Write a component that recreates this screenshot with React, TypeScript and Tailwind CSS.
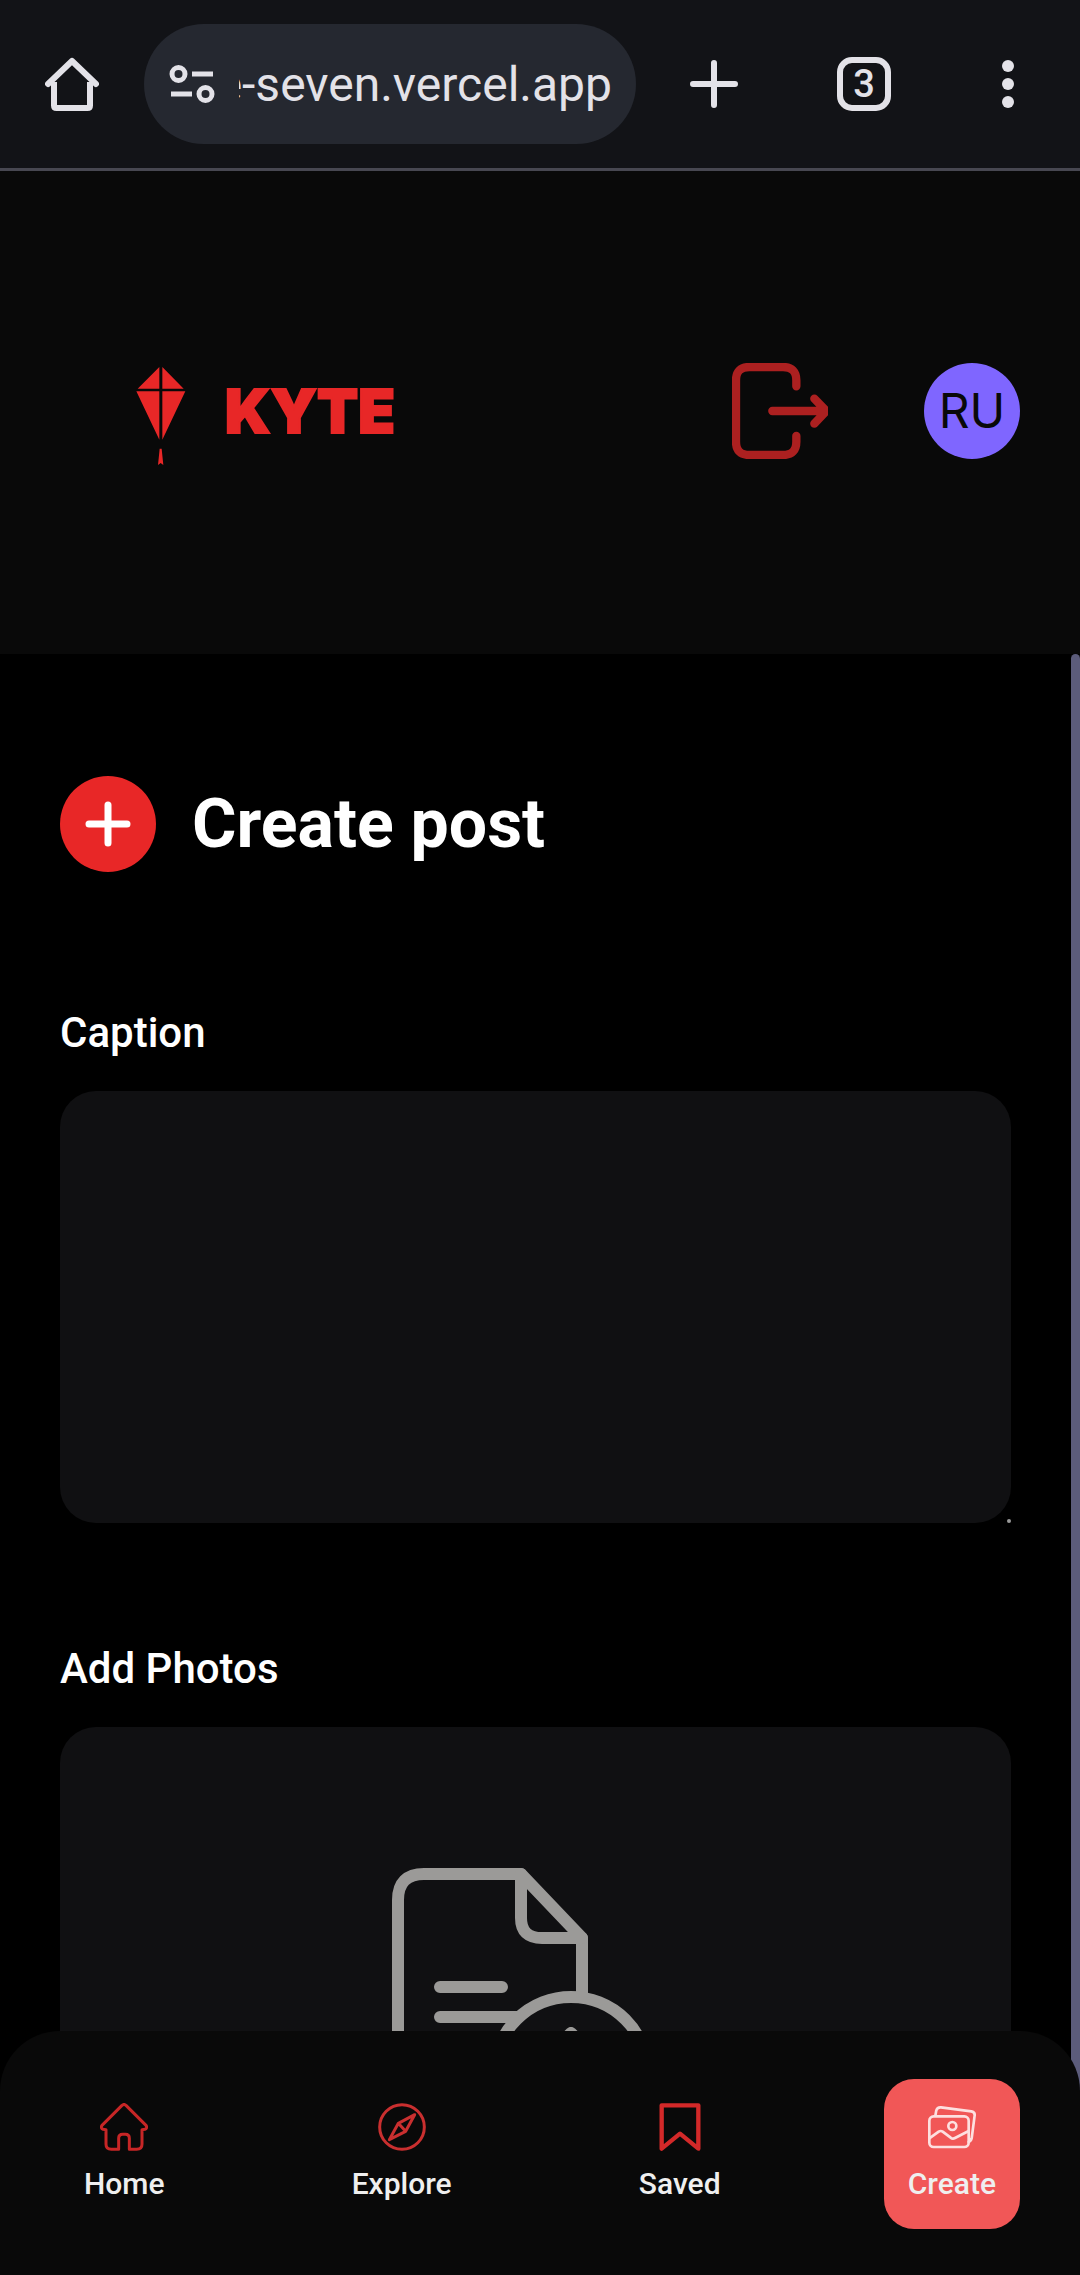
import React from "react";

function BrowserBar() {
  return (
    <div className="flex h-[171px] shrink-0 items-center border-b-[3px] border-[#474751] bg-[#121317] text-[#e3e2e8]">
      <button aria-label="Home page" className="ml-[45px] shrink-0">
        <svg width="54" height="54" viewBox="0 0 54 54" fill="none" stroke="currentColor" strokeWidth="6">
          <path d="M3 27 27 4 51 27" strokeLinecap="round" strokeLinejoin="round" />
          <path d="M9 25V48.500Q9 51 11.500 51H42.500Q45 51 45 48.500V25" />
        </svg>
      </button>
      <button className="mr-[54px] ml-[45px] flex h-[120px] min-w-0 flex-1 items-center rounded-full bg-[#252830] pr-6 pl-[25px]">
        <svg className="shrink-0" width="46" height="40" viewBox="0 0 46 40" fill="none" stroke="currentColor" strokeWidth="5">
          <circle cx="9.500" cy="10" r="6.500" />
          <path d="M23 10h21M2 30h21" />
          <circle cx="36.500" cy="30" r="6.500" />
        </svg>
        <span className="ml-6 flex min-w-0 flex-1 justify-end overflow-hidden pt-[2px] text-[48px] leading-[60px] whitespace-nowrap">
          kyte-seven.vercel.app
        </span>
      </button>
      <button aria-label="New tab" className="shrink-0">
        <svg width="48" height="48" viewBox="0 0 48 48" stroke="currentColor" strokeWidth="6" strokeLinecap="round">
          <path d="M24 3v42M3 24h42" />
        </svg>
      </button>
      <button
        aria-label="Open tabs"
        className="ml-[99px] flex size-[54px] shrink-0 items-center justify-center rounded-[15px] border-[6px] border-current text-[38px] leading-[42px] font-medium"
      >
        3
      </button>
      <button aria-label="Menu" className="mr-[66px] ml-[111px] flex shrink-0 flex-col gap-[6px]">
        <span className="size-3 rounded-full bg-current" />
        <span className="size-3 rounded-full bg-current" />
        <span className="size-3 rounded-full bg-current" />
      </button>
    </div>
  );
}

function Header() {
  return (
    <header className="flex shrink-0 items-center justify-between bg-[#090909] pt-48 pr-[60px] pb-[195px] pl-[136px]">
      <a href="#home" className="flex h-24 items-center text-[#e82727]">
        <svg width="50" height="108" viewBox="110 52 150 324" fill="currentColor">
          <path d="M180 82V147H115ZM189 82 253 147H189ZM111 155H180V300ZM189 155H258L189 300ZM181 327H187L192 376 184 370 176 376Z" />
        </svg>
        <span className="ml-[39px] font-['Inter'] text-[60px] leading-[60px] font-black [-webkit-text-stroke:2px_currentColor]">
          KYTE
        </span>
      </a>
      <div className="flex items-center gap-24">
        <button aria-label="Log out">
          <svg width="96" height="96" viewBox="0 0 288 288" fill="none" stroke="#ac2020" strokeWidth="25" strokeLinecap="round" strokeLinejoin="round">
            <path d="M193 70V52Q193 12 153 12H52Q12 12 12 52V236Q12 276 52 276H153Q193 276 193 236V219" />
            <path d="M121 144H276M247 107 283 144 247 182" />
          </svg>
        </button>
        <a href="#profile" className="flex size-24 items-center justify-center rounded-full bg-[#7f66ff] font-['Inter'] text-[48px] leading-[48px] text-[#090909]">
          RU
        </a>
      </div>
    </header>
  );
}

function UploadIcon() {
  return (
    <svg width="288" height="288" viewBox="0 0 288 288" fill="none" stroke="#9b9a98" strokeWidth="12" strokeLinecap="round" strokeLinejoin="round">
      <path d="M110 282H30Q6 282 6 256V32Q6 6 32 6H129L190 70V129" />
      <path d="M129 6V50Q129 70 150 70H190" />
      <path d="M48 119H110M48 149H126" />
      <circle cx="179" cy="206" r="77" />
      <path d="M179 245V165M150 194 179 165 208 194" />
    </svg>
  );
}

function CreateForm() {
  return (
    <form className="min-w-0 flex-1 px-[60px] pt-[122px]">
      <div className="flex items-center gap-9">
        <svg width="96" height="96" viewBox="0 0 96 96">
          <circle cx="48" cy="48" r="48" fill="#e82727" />
          <path d="M48 29v38M29 48h38" stroke="#fff" strokeWidth="7" strokeLinecap="round" />
        </svg>
        <h1 className="text-[68px] leading-[84px] font-bold">Create post</h1>
      </div>
      <label htmlFor="caption" className="mt-[140px] block text-[42px] leading-[42px] font-medium">
        Caption
      </label>
      <div className="relative mt-[37px]">
        <textarea id="caption" className="block h-[432px] w-full resize-none rounded-[36px] bg-[#101012] p-9 text-[42px] outline-none" />
        <span className="absolute right-0 bottom-0 size-1 rounded-full bg-[#9a9a9a]" />
      </div>
      <label htmlFor="photos" className="mt-[125px] block text-[42px] leading-[42px] font-medium">
        Add Photos
      </label>
      <label htmlFor="photos" className="mt-[37px] flex flex-col items-center rounded-[36px] bg-[#101012] pt-[141px] pb-36">
        <UploadIcon />
        <input id="photos" type="file" className="sr-only" />
      </label>
    </form>
  );
}

const HomeIcon = (
  <path
    strokeWidth="9"
    d="M66 7Q72 2 78 7L138 67Q143 76 135 79L126 80V124Q126 139 110 139H88V106Q88 94 76 94H68Q56 94 56 106V139H34Q18 139 18 124V80L9 79Q1 76 6 67Z"
  />
);
const ExploreIcon = (
  <g strokeWidth="9">
    <circle cx="72" cy="72" r="67" />
    <path d="M110 35 61 61 34 110 83 85ZM61 61 83 85" />
  </g>
);
const SavedIcon = <path strokeWidth="13" d="M17 7H127V137L72 92 17 137Z" />;
const CreateIcon = (
  <g strokeWidth="8">
    <rect x="4" y="40" width="118" height="92" rx="13" />
    <circle cx="73" cy="69" r="12" />
    <path d="M4 106 32 86Q38 82 44 86L68 104Q74 109 81 105L122 84" />
    <path d="M22 38 25 22Q28 12 39 13L130 25Q141 27 140 37L131 106Q129 115 122 117" />
  </g>
);

const tabs = [
  { label: "Home", icon: HomeIcon, style: "text-[#c72626]" },
  { label: "Explore", icon: ExploreIcon, style: "text-[#c92f2f]" },
  { label: "Saved", icon: SavedIcon, style: "text-[#d32929]" },
  { label: "Create", icon: CreateIcon, style: "bg-[#f15757] text-[#fde0e0]" },
];

function BottomNav() {
  return (
    <nav className="fixed inset-x-0 bottom-0 flex justify-between rounded-t-[60px] bg-[#090909] px-[60px] pt-12 pb-[46px]">
      {tabs.map((tab) => (
        <a key={tab.label} href={"#" + tab.label.toLowerCase()} className={"flex flex-col items-center gap-3 rounded-[30px] p-6 " + tab.style}>
          <svg width="48" height="48" viewBox="0 0 144 144" fill="none" stroke="currentColor" strokeLinecap="round" strokeLinejoin="round">
            {tab.icon}
          </svg>
          <span className="text-[30px] leading-[42px] font-medium text-[#efefef]">{tab.label}</span>
        </a>
      ))}
    </nav>
  );
}

export default function App() {
  return (
    <div className="flex h-screen flex-col overflow-hidden bg-black font-['Roboto',sans-serif] text-white">
      <BrowserBar />
      <Header />
      <main className="flex min-h-0 flex-1 overflow-hidden">
        <CreateForm />
        <div className="w-[9px] shrink-0 rounded-t-full bg-[#5c5c7b]" />
      </main>
      <BottomNav />
    </div>
  );
}
